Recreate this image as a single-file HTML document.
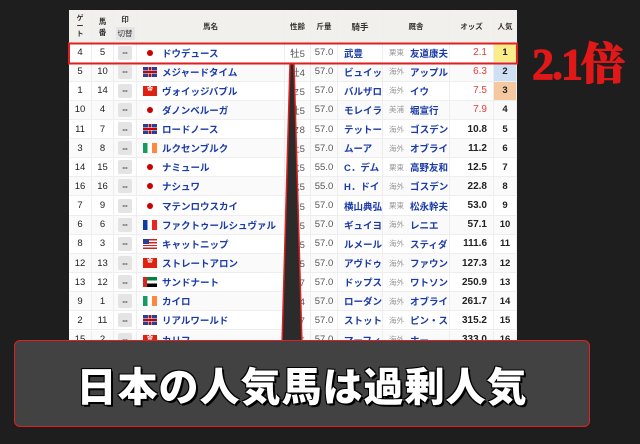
<!DOCTYPE html>
<html><head><meta charset="utf-8"><style>
body{margin:0;width:640px;height:444px;background:#1e1e1e;position:relative;overflow:hidden;font-family:"Liberation Sans","Noto Sans CJK JP",sans-serif}
.tbl{position:absolute;left:69px;top:10px;width:448px;height:340px;background:#fff;overflow:hidden}
.hd{position:absolute;left:0;top:0;width:448px;height:33px;background:#f2f0ec;border-bottom:1px solid #ddd}
.c{position:absolute;top:0;height:100%;display:flex;align-items:center;justify-content:center;font-size:9.5px;color:#222;box-sizing:border-box;border-right:1px solid #eee;white-space:nowrap}
.hd .c{font-weight:bold;color:#333}
.row{position:absolute;left:0;width:448px;height:19px;border-bottom:1px solid #eee;box-sizing:border-box}
.b{color:#1a3aa8;font-weight:bold;justify-content:flex-start;padding-left:6px;font-size:9.5px}
.g{color:#999;font-size:7.5px;font-weight:normal}
.mk{width:14px;height:14px;background:#e4e4e4;border-radius:2px;font-size:8px;display:flex;align-items:center;justify-content:center;font-weight:bold;color:#333}
.fl{width:14px;height:10px;margin-right:5px;display:inline-block;position:relative;flex:none}
.od{justify-content:flex-end;padding-right:6px;font-weight:bold;font-size:10px}
.r{color:#e04040;font-weight:normal}
</style></head><body>
<div class="tbl">
<div class="hd">
<div class="c" style="left:0;width:23px;font-size:7px;line-height:8px;text-align:center;flex-direction:column">ゲ<br>ー<br>ト</div>
<div class="c" style="left:23px;width:22px;font-size:7.5px;flex-direction:column">馬<br>番</div>
<div class="c" style="left:45px;width:23px;font-size:7.5px;flex-direction:column">印<span style="background:#e4e4e4;padding:1px 2px;margin-top:2px;font-weight:normal">切替</span></div>
<div class="c" style="left:68px;width:148px;font-size:7.5px">馬名</div>
<div class="c" style="left:216px;width:26px;font-size:7.5px">性齢</div>
<div class="c" style="left:242px;width:27px;font-size:7.5px">斤量</div>
<div class="c" style="left:269px;width:45px;font-size:8.5px">騎手</div>
<div class="c" style="left:314px;width:67px;font-size:7.5px">厩舎</div>
<div class="c" style="left:381px;width:44px;font-size:7.5px">オッズ</div>
<div class="c" style="left:425px;width:23px;font-size:7.5px">人気</div>
</div>
<div id="rows"></div>
</div>
<svg style="position:absolute;left:0;top:0" width="640" height="444">
<polygon points="290,64 294,64 302,345 282,345" fill="#2b2b2b"/>
<line x1="290" y1="64" x2="282" y2="345" stroke="#e02020" stroke-width="1.5"/>
<line x1="294" y1="64" x2="302" y2="345" stroke="#e02020" stroke-width="1.5"/>
<rect x="69" y="43.5" width="448" height="20" fill="none" stroke="#e02020" stroke-width="2"/>
</svg>
<div style="position:absolute;left:14px;top:340px;width:574px;height:85px;background:#424242;border:1.5px solid #e02020;border-radius:6px;display:flex;align-items:center;justify-content:center;color:#fff;font-family:'Liberation Sans','Noto Sans CJK JP',sans-serif;font-weight:900;font-size:40px;letter-spacing:1px;text-shadow:2px 2px 0 #000,-1px -1px 0 #000,1px -1px 0 #000,-1px 1px 0 #000">日本の人気馬は過剰人気</div>
<div style="position:absolute;left:532px;top:28px;color:#e01818;font-family:'Liberation Serif','Noto Serif CJK SC',serif;font-weight:900;font-size:44px;letter-spacing:-2px;-webkit-text-stroke:1px #e01818">2.1倍</div>
<script>
const d=[["4","5","jp","ドウデュース","牡5","57.0","武豊","栗東","友道康夫","2.1","1","#fbec8a"],
["5","10","gb","メジャードタイム","牡4","57.0","ビュイッ","海外","アップル","6.3","2","#cfe0f5"],
["1","14","hk","ヴォイッジバブル","セ5","57.0","バルザロ","海外","イウ","7.5","3","#f5c9a0"],
["10","4","jp","ダノンベルーガ","牡5","57.0","モレイラ","美浦","堀宣行","7.9","4"],
["11","7","gb","ロードノース","セ8","57.0","テットー","海外","ゴスデン","10.8","5"],
["3","8","ie","ルクセンブルク","牡5","57.0","ムーア","海外","オブライ","11.2","6"],
["14","15","jp","ナミュール","牝5","55.0","C．デム","栗東","高野友和","12.5","7"],
["16","16","jp","ナシュワ","牝5","55.0","H．ドイ","海外","ゴスデン","22.8","8"],
["7","9","jp","マテンロウスカイ","牡5","57.0","横山典弘","栗東","松永幹夫","53.0","9"],
["6","6","fr","ファクトゥールシュヴァル","セ5","57.0","ギュイヨ","海外","レニエ","57.1","10"],
["8","3","us","キャットニップ","牡5","57.0","ルメール","海外","スティダ","111.6","11"],
["12","13","hk","ストレートアロン","牡5","57.0","アヴドゥ","海外","ファウン","127.3","12"],
["13","12","ae","サンドナート","牡7","57.0","ドップス","海外","ワトソン","250.9","13"],
["9","1","ie","カイロ","牡4","57.0","ローダン","海外","オブライ","261.7","14"],
["2","11","gb","リアルワールド","牡7","57.0","ストット","海外","ピン・ス","315.2","15"],
["15","2","hk","カリフ","牡5","57.0","マーフィ","海外","ホー","333.0","16"]];
const F={jp:'<span class="fl" style="background:#fff"><span style="position:absolute;left:4px;top:2px;width:6px;height:6px;border-radius:50%;background:#c00"></span></span>',
gb:'<span class="fl" style="background:#2a3f8f;background-image:linear-gradient(0deg,transparent 35%,#fff 35%,#fff 42%,#c00 42%,#c00 58%,#fff 58%,#fff 65%,transparent 65%),linear-gradient(90deg,transparent 38%,#fff 38%,#fff 44%,#c00 44%,#c00 56%,#fff 56%,#fff 62%,transparent 62%)"></span>',
hk:'<span class="fl" style="background:#d21"><span style="position:absolute;left:4px;top:1px;color:#fff;font-size:6px;line-height:7px">✿</span></span>',
ie:'<span class="fl" style="background:linear-gradient(90deg,#169b62 33%,#fff 33%,#fff 66%,#ff883e 66%)"></span>',
fr:'<span class="fl" style="background:linear-gradient(90deg,#0b3fa8 33%,#fff 33%,#fff 66%,#e22 66%)"></span>',
us:'<span class="fl" style="background:repeating-linear-gradient(0deg,#c22 0 1.4px,#fff 1.4px 2.8px)"><span style="position:absolute;left:0;top:0;width:6px;height:5px;background:#2a3f8f"></span></span>',
ae:'<span class="fl" style="background:linear-gradient(0deg,#000 33%,#fff 33%,#fff 66%,#00843d 66%)"><span style="position:absolute;left:0;top:0;width:4px;height:10px;background:#d22"></span></span>'};
let h='';
d.forEach((r,i)=>{const top=33.5+i*19.14;const bg=i%2?'#fafafa':'#fff';
const red=parseFloat(r[9])<10;
h+=`<div class="row" style="top:${top}px;background:${bg}">
<div class="c" style="left:0;width:23px">${r[0]}</div>
<div class="c" style="left:23px;width:22px">${r[1]}</div>
<div class="c" style="left:45px;width:23px"><span class="mk">--</span></div>
<div class="c b" style="left:68px;width:148px">${F[r[2]]}${r[3]}</div>
<div class="c" style="left:216px;width:26px;color:#555">${r[4]}</div>
<div class="c" style="left:242px;width:27px;color:#555">${r[5]}</div>
<div class="c b" style="left:269px;width:45px">${r[6]}</div>
<div class="c b" style="left:314px;width:67px"><span class="g" style="margin-right:6px">${r[7]}</span>${r[8]}</div>
<div class="c od${red?' r':''}" style="left:381px;width:44px">${r[9]}</div>
<div class="c" style="left:425px;width:23px;font-weight:bold;${r[11]?'background:'+r[11]:''}">${r[10]}</div></div>`;});
document.getElementById('rows').innerHTML=h;
</script>
</body></html>
